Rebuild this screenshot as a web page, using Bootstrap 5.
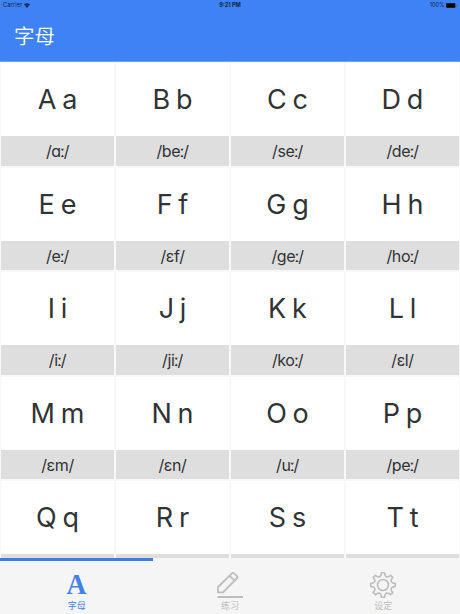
<!DOCTYPE html>
<html lang="zh-CN">
<head>
<meta charset="utf-8">
<meta name="viewport" content="width=device-width, initial-scale=1">
<title>字母</title>
<link href="https://cdn.jsdelivr.net/npm/bootstrap@5.3.0/dist/css/bootstrap.min.css" rel="stylesheet">
<style>
body{font-family:Inter,"Noto Sans CJK SC",sans-serif;background:#f8f8f8;color:#303434}
.app-head{height:62px;background:#3f82f5;border-bottom:1px solid #6ea0f6}
.status-bar{height:11px;padding:0 3px 0 3px;font-size:5.6px;line-height:11px;color:#0b2447}
.status-bar>*{width:33.333%}
.status-bar .side{letter-spacing:.15px}
.status-bar .wifi{margin-left:2px}
.status-bar .battery{margin-left:1.5px}
.screen-title{font:350 20.5px/30px "Noto Sans CJK SC",sans-serif;padding:9px 0 0 14px;color:#fff}
.pane{min-height:0}
.letters{display:grid;grid-template-columns:repeat(4,1fr);gap:2px;padding:1px 1px 0}
.tile{height:102.5px}
.glyphs{height:73px;font-size:27px;line-height:1;word-spacing:-1.8px;background:#fff}
.sound{height:29.5px;padding-top:1px;font-size:16px;line-height:1;letter-spacing:-.4px;background:#dedede}
.sound b{font-weight:800;margin:0 -.7px}
.tabs{height:56px;background:#f5f5f5}
.tabs a{height:56px;padding-top:12px;font:9px/12px "Noto Sans CJK SC",sans-serif;color:#bdbdbd}
.tabs a svg{height:28px;width:28px;margin-bottom:2px}
.tabs a.active{color:#4380e8}
.tab-line{height:3px;width:33.333%;background:#3f7ce0}
.tab-a{font:bold 29px/26px "Liberation Serif",serif;height:26px;margin:1px 0 3px;transform:scaleX(.95)}
</style>
<script src="https://cdn.jsdelivr.net/npm/bootstrap@5.3.0/dist/js/bootstrap.bundle.min.js"></script>
</head>
<body class="vh-100 d-flex flex-column overflow-hidden">
<header class="app-head flex-shrink-0">
  <div class="status-bar d-flex">
    <div class="side d-flex align-items-center">Carrier <svg class="wifi" width="6" height="5" viewBox="0 0 12 10"><path d="M0 3Q6-2 12 3L6 10z" fill="#0b2447"/><path d="M2 5.2q4-3 8 0" fill="none" stroke="#3f82f5" stroke-width=".8"/></svg></div>
    <div class="text-center fw-bold">9:21 PM</div>
    <div class="d-flex align-items-center justify-content-end">100% <svg class="battery" width="11" height="5" viewBox="0 0 11 5"><rect width="9.4" height="4.4" y=".3" rx=".8"/><path d="M10 1.6q.8.9 0 1.8z"/></svg></div>
  </div>
  <h1 class="screen-title m-0">字母</h1>
</header>
<main class="pane flex-grow-1 overflow-hidden">
  <div class="letters text-center">
    <div class="tile"><div class="glyphs d-flex align-items-center justify-content-center">A a</div><div class="sound d-flex align-items-center justify-content-center">/ɑ<b>ː</b>/</div></div>
    <div class="tile"><div class="glyphs d-flex align-items-center justify-content-center">B b</div><div class="sound d-flex align-items-center justify-content-center">/be<b>ː</b>/</div></div>
    <div class="tile"><div class="glyphs d-flex align-items-center justify-content-center">C c</div><div class="sound d-flex align-items-center justify-content-center">/se<b>ː</b>/</div></div>
    <div class="tile"><div class="glyphs d-flex align-items-center justify-content-center">D d</div><div class="sound d-flex align-items-center justify-content-center">/de<b>ː</b>/</div></div>
    <div class="tile"><div class="glyphs d-flex align-items-center justify-content-center">E e</div><div class="sound d-flex align-items-center justify-content-center">/e<b>ː</b>/</div></div>
    <div class="tile"><div class="glyphs d-flex align-items-center justify-content-center">F f</div><div class="sound d-flex align-items-center justify-content-center">/ɛf/</div></div>
    <div class="tile"><div class="glyphs d-flex align-items-center justify-content-center">G g</div><div class="sound d-flex align-items-center justify-content-center">/ge<b>ː</b>/</div></div>
    <div class="tile"><div class="glyphs d-flex align-items-center justify-content-center">H h</div><div class="sound d-flex align-items-center justify-content-center">/ho<b>ː</b>/</div></div>
    <div class="tile"><div class="glyphs d-flex align-items-center justify-content-center">I i</div><div class="sound d-flex align-items-center justify-content-center">/i<b>ː</b>/</div></div>
    <div class="tile"><div class="glyphs d-flex align-items-center justify-content-center">J j</div><div class="sound d-flex align-items-center justify-content-center">/ji<b>ː</b>/</div></div>
    <div class="tile"><div class="glyphs d-flex align-items-center justify-content-center">K k</div><div class="sound d-flex align-items-center justify-content-center">/ko<b>ː</b>/</div></div>
    <div class="tile"><div class="glyphs d-flex align-items-center justify-content-center">L l</div><div class="sound d-flex align-items-center justify-content-center">/ɛl/</div></div>
    <div class="tile"><div class="glyphs d-flex align-items-center justify-content-center">M m</div><div class="sound d-flex align-items-center justify-content-center">/ɛm/</div></div>
    <div class="tile"><div class="glyphs d-flex align-items-center justify-content-center">N n</div><div class="sound d-flex align-items-center justify-content-center">/ɛn/</div></div>
    <div class="tile"><div class="glyphs d-flex align-items-center justify-content-center">O o</div><div class="sound d-flex align-items-center justify-content-center">/u<b>ː</b>/</div></div>
    <div class="tile"><div class="glyphs d-flex align-items-center justify-content-center">P p</div><div class="sound d-flex align-items-center justify-content-center">/pe<b>ː</b>/</div></div>
    <div class="tile"><div class="glyphs d-flex align-items-center justify-content-center">Q q</div><div class="sound"></div></div>
    <div class="tile"><div class="glyphs d-flex align-items-center justify-content-center">R r</div><div class="sound"></div></div>
    <div class="tile"><div class="glyphs d-flex align-items-center justify-content-center">S s</div><div class="sound"></div></div>
    <div class="tile"><div class="glyphs d-flex align-items-center justify-content-center">T t</div><div class="sound"></div></div>
  </div>
</main>
<nav class="tabs flex-shrink-0 position-relative">
  <div class="tab-line position-absolute top-0 start-0"></div>
  <div class="d-flex">
    <a class="active flex-fill w-100 d-flex flex-column align-items-center text-decoration-none" href="#"><span class="tab-a">A</span>字母</a>
    <a class="flex-fill w-100 d-flex flex-column align-items-center text-decoration-none" href="#"><svg viewBox="0 0 28 28" fill="none" stroke="#bdbdbd" stroke-linejoin="round"><path d="M2 22.3V17L16.2 3.2Q17 2.4 17.8 3.2L21.2 6.4Q22 7.2 21.2 8L7 22.3zM13.6 5.8l5 4.8" stroke-width="1.8"/><path d="M1.5 27H27" stroke-width="2"/></svg>练习</a>
    <a class="flex-fill w-100 d-flex flex-column align-items-center text-decoration-none" href="#"><svg viewBox="0 0 28 28" fill="none" stroke="#bdbdbd" stroke-width="1.6" stroke-linejoin="round"><circle cx="14" cy="15" r="5.5"/><path id="gear"/></svg>设定</a>
  </div>
</nav>
<script>
// Gear outline: eight teeth joined by rounded valleys.
(() => {
  const at = (r, a) => {
    const t = a * Math.PI / 180;
    return (14 + r * Math.sin(t)).toFixed(2) + ' ' + (15 - r * Math.cos(t)).toFixed(2);
  };
  let d = 'M' + at(10.6, -10);
  for (let a = 0; a < 360; a += 45) {
    d += 'L' + at(12.4, a - 7) + 'L' + at(12.4, a + 7) + 'L' + at(10.6, a + 10)
       + 'C' + at(8.6, a + 16) + ' ' + at(8.6, a + 29) + ' ' + at(10.6, a + 35);
  }
  document.getElementById('gear').setAttribute('d', d + 'Z');
})();
</script>
</body>
</html>
